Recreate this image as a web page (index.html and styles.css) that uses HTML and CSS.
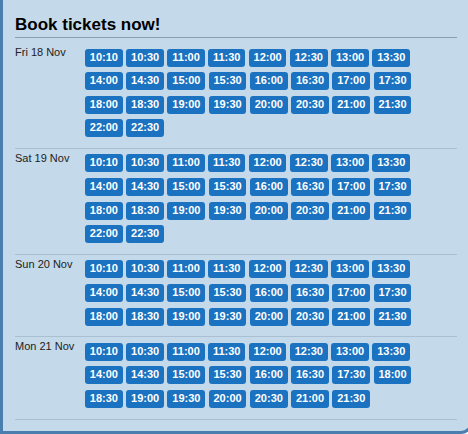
FILE: index.html
```html
<!DOCTYPE html>
<html lang="en">
<head>
    <meta charset="UTF-8">
    <title>Book tickets now!</title>
    <link rel="stylesheet" href="styles.css">
</head>
<body>
    <div class="booking">
        <h2 class="booking-title">Book tickets now!</h2>

        <div class="day">
            <p class="day-label">Fri 18 Nov</p>
            <div class="times">
                <a class="time" href="#">10:10</a>
                <a class="time" href="#">10:30</a>
                <a class="time" href="#">11:00</a>
                <a class="time" href="#">11:30</a>
                <a class="time" href="#">12:00</a>
                <a class="time" href="#">12:30</a>
                <a class="time" href="#">13:00</a>
                <a class="time" href="#">13:30</a>
                <a class="time" href="#">14:00</a>
                <a class="time" href="#">14:30</a>
                <a class="time" href="#">15:00</a>
                <a class="time" href="#">15:30</a>
                <a class="time" href="#">16:00</a>
                <a class="time" href="#">16:30</a>
                <a class="time" href="#">17:00</a>
                <a class="time" href="#">17:30</a>
                <a class="time" href="#">18:00</a>
                <a class="time" href="#">18:30</a>
                <a class="time" href="#">19:00</a>
                <a class="time" href="#">19:30</a>
                <a class="time" href="#">20:00</a>
                <a class="time" href="#">20:30</a>
                <a class="time" href="#">21:00</a>
                <a class="time" href="#">21:30</a>
                <a class="time" href="#">22:00</a>
                <a class="time" href="#">22:30</a>
            </div>
        </div>

        <div class="day">
            <p class="day-label">Sat 19 Nov</p>
            <div class="times">
                <a class="time" href="#">10:10</a>
                <a class="time" href="#">10:30</a>
                <a class="time" href="#">11:00</a>
                <a class="time" href="#">11:30</a>
                <a class="time" href="#">12:00</a>
                <a class="time" href="#">12:30</a>
                <a class="time" href="#">13:00</a>
                <a class="time" href="#">13:30</a>
                <a class="time" href="#">14:00</a>
                <a class="time" href="#">14:30</a>
                <a class="time" href="#">15:00</a>
                <a class="time" href="#">15:30</a>
                <a class="time" href="#">16:00</a>
                <a class="time" href="#">16:30</a>
                <a class="time" href="#">17:00</a>
                <a class="time" href="#">17:30</a>
                <a class="time" href="#">18:00</a>
                <a class="time" href="#">18:30</a>
                <a class="time" href="#">19:00</a>
                <a class="time" href="#">19:30</a>
                <a class="time" href="#">20:00</a>
                <a class="time" href="#">20:30</a>
                <a class="time" href="#">21:00</a>
                <a class="time" href="#">21:30</a>
                <a class="time" href="#">22:00</a>
                <a class="time" href="#">22:30</a>
            </div>
        </div>

        <div class="day">
            <p class="day-label">Sun 20 Nov</p>
            <div class="times">
                <a class="time" href="#">10:10</a>
                <a class="time" href="#">10:30</a>
                <a class="time" href="#">11:00</a>
                <a class="time" href="#">11:30</a>
                <a class="time" href="#">12:00</a>
                <a class="time" href="#">12:30</a>
                <a class="time" href="#">13:00</a>
                <a class="time" href="#">13:30</a>
                <a class="time" href="#">14:00</a>
                <a class="time" href="#">14:30</a>
                <a class="time" href="#">15:00</a>
                <a class="time" href="#">15:30</a>
                <a class="time" href="#">16:00</a>
                <a class="time" href="#">16:30</a>
                <a class="time" href="#">17:00</a>
                <a class="time" href="#">17:30</a>
                <a class="time" href="#">18:00</a>
                <a class="time" href="#">18:30</a>
                <a class="time" href="#">19:00</a>
                <a class="time" href="#">19:30</a>
                <a class="time" href="#">20:00</a>
                <a class="time" href="#">20:30</a>
                <a class="time" href="#">21:00</a>
                <a class="time" href="#">21:30</a>
            </div>
        </div>

        <div class="day">
            <p class="day-label">Mon 21 Nov</p>
            <div class="times">
                <a class="time" href="#">10:10</a>
                <a class="time" href="#">10:30</a>
                <a class="time" href="#">11:00</a>
                <a class="time" href="#">11:30</a>
                <a class="time" href="#">12:00</a>
                <a class="time" href="#">12:30</a>
                <a class="time" href="#">13:00</a>
                <a class="time" href="#">13:30</a>
                <a class="time" href="#">14:00</a>
                <a class="time" href="#">14:30</a>
                <a class="time" href="#">15:00</a>
                <a class="time" href="#">15:30</a>
                <a class="time" href="#">16:00</a>
                <a class="time" href="#">16:30</a>
                <a class="time" href="#">17:30</a>
                <a class="time" href="#">18:00</a>
                <a class="time" href="#">18:30</a>
                <a class="time" href="#">19:00</a>
                <a class="time" href="#">19:30</a>
                <a class="time" href="#">20:00</a>
                <a class="time" href="#">20:30</a>
                <a class="time" href="#">21:00</a>
                <a class="time" href="#">21:30</a>
            </div>
        </div>
    </div>
</body>
</html>
```
FILE: styles.css
```css
*{margin: 0;padding: 0;}

body{
    overflow: hidden;
    font-family: "Liberation Sans", Arial, Helvetica, sans-serif;
}

/* box runs a little past the right edge of the window */
.booking{
    box-sizing: border-box;
    width: 473px;
    height: 434px;
    padding: 15px 13px 0 12px;
    background-color: #c4d9ea;
    border-left: 3px solid #4a7eae;
    border-right: 3px solid #4a7eae;
    border-bottom: 3px solid #4a7eae;
    border-bottom-right-radius: 12px;
}

.booking-title{
    font-size: 17px;
    line-height: 20px;
    font-weight: bold;
    color: #000;
    padding-bottom: 2px;
    margin-bottom: 5px;
    border-bottom: 1px solid #8c9dac;
}

.day{
    display: flex;
    align-items: flex-start;
    padding-bottom: 10.5px;
    border-bottom: 1px solid #aabfd1;
}

.day + .day{
    padding-top: 0;
}

.day-label{
    width: 70px;
    flex-shrink: 0;
    margin-top: 3px;
    font-size: 11px;
    color: #222;
}

.times{
    width: 332px;
    margin-top: 5.5px;
    display: flex;
    flex-wrap: wrap;
    gap: 5.67px 3.5px;
}

.time{
    display: block;
    padding: 1px 4.8px 3px;
    line-height: 14px;
    font-size: 11px;
    font-weight: bold;
    color: #fff;
    text-decoration: none;
    background-color: #1a72c0;
    border-radius: 3px;
}
```
